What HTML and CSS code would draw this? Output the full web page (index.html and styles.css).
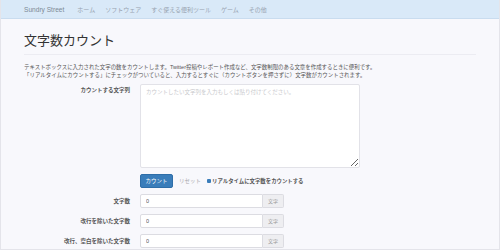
FILE: index.html
```html
<!DOCTYPE html>
<html lang="ja">
<head>
	<meta charset="utf-8">
	<title>文字数カウント - Sundry Street</title>
	<link rel="stylesheet" href="styles.css">
</head>
<body>
	<div class="frame">
		<!-- TOP -->
		<nav class="navbar">
			<a class="brand" href="#">Sundry Street</a>
			<ul class="nav-list">
				<li><a href="#">ホーム</a></li>
				<li><a href="#">ソフトウェア</a></li>
				<li><a href="#">すぐ使える便利ツール</a></li>
				<li><a href="#">ゲーム</a></li>
				<li><a href="#">その他</a></li>
			</ul>
		</nav>

		<!-- Counter -->
		<div class="container">
			<h1 class="page-title">文字数カウント</h1>
			<p class="intro">テキストボックスに入力された文字の数をカウントします。Twitter投稿やレポート作成など、文字数制限のある文章を作成するときに便利です。<br>「リアルタイムにカウントする」にチェックがついていると、入力するとすぐに（カウントボタンを押さずに）文字数がカウントされます。</p>

			<form class="form-grid">
				<label class="field-label label-top" for="source">カウントする文字列</label>
				<textarea id="source" class="text-box" placeholder="カウントしたい文字列を入力もしくは貼り付けてください。"></textarea>

				<div></div>
				<div class="actions">
					<button type="button" class="btn btn-primary">カウント</button>
					<button type="button" class="btn btn-plain">リセット</button>
					<label class="realtime"><input type="checkbox" class="check" checked>リアルタイムに文字数をカウントする</label>
				</div>

				<label class="field-label">文字数</label>
				<div class="input-group"><input type="text" class="count" value="0" readonly><span class="addon">文字</span></div>

				<label class="field-label">改行を除いた文字数</label>
				<div class="input-group"><input type="text" class="count" value="0" readonly><span class="addon">文字</span></div>

				<label class="field-label">改行、空白を除いた文字数</label>
				<div class="input-group"><input type="text" class="count" value="0" readonly><span class="addon">文字</span></div>
			</form>
		</div>
	</div>
</body>
</html>
```

FILE: styles.css
```css
/*---------------- page ----------------*/
body{
	margin: 0;
	background: #ffffff;
	font-family: "Liberation Sans", "Noto Sans CJK JP", sans-serif;
	color: #444;
}

.frame{
	height: 249px;
	background-color: #f8f8fc;
	border: 1px solid #e4e4ea;
	border-top: 0;
	overflow: hidden;
}

/*---------------- navbar ----------------*/
.navbar{
	display: flex;
	align-items: center;
	height: 18px;
	padding-left: 23px;
	background-color: #d9e9f8;
	border-bottom: 1px solid #c9dcef;
}

.brand{
	font-size: 6.6px;
	color: #7d8996;
	text-decoration: none;
	margin-right: 8px;
}

.nav-list{
	display: flex;
	margin: 0;
	padding: 0;
	list-style: none;
}

.nav-list a{
	display: block;
	padding: 0 5px;
	font-size: 6px;
	color: #98a3b0;
	text-decoration: none;
}

/*---------------- content ----------------*/
.container{
	padding: 0 23px;
}

.page-title{
	margin: 14px 0 0;
	padding-bottom: 5px;
	font-size: 13px;
	line-height: 16px;
	font-weight: normal;
	color: #333;
	border-bottom: 1px solid #ececf2;
}

.intro{
	margin: 8px 0 5px;
	font-size: 5.45px;
	line-height: 8px;
	color: #555;
	white-space: nowrap;
}

/* form layout: label column + control column */
.form-grid{
	display: grid;
	grid-template-columns: 106px 220px;
	column-gap: 10px;
	row-gap: 6px;
	align-items: center;
}

.field-label{
	text-align: right;
	font-size: 5.5px;
	font-weight: bold;
	line-height: 14px;
	color: #555;
}

.label-top{
	align-self: start;
	line-height: 12px;
}

.text-box{
	box-sizing: border-box;
	width: 220px;
	height: 84px;
	margin: 0;
	padding: 3px 5px;
	font-family: inherit;
	font-size: 5.5px;
	background: #fff;
	border: 1px solid #e2e2e8;
	border-radius: 2px;
}

.text-box::placeholder{
	color: #c8c8cc;
}

.actions{
	display: flex;
	align-items: center;
	height: 14px;
}

.btn{
	height: 14px;
	padding: 0 5px;
	font-family: inherit;
	font-size: 5.5px;
	white-space: nowrap;
	border: 0;
	border-radius: 2px;
	cursor: pointer;
}

.btn-primary{
	width: 33px;
	padding: 0;
	background-color: #3a7dba;
	color: #fff;
	border: 1px solid #2f6ea8;
}

.btn-plain{
	background: none;
	color: #a8a8ad;
	padding: 0 6px;
}

.realtime{
	display: flex;
	align-items: center;
	font-size: 5.4px;
	font-weight: bold;
	color: #555;
}

.check{
	appearance: none;
	width: 4px;
	height: 4px;
	margin: 0 1px 0 0;
	background-color: #3a7dba;
	border-radius: 1px;
}

.input-group{
	display: flex;
	height: 14px;
}

.count{
	box-sizing: border-box;
	width: 123px;
	height: 14px;
	margin: 0;
	padding: 0 5px;
	font-family: inherit;
	font-size: 5.5px;
	color: #555;
	background: #fff;
	border: 1px solid #dcdce2;
	border-radius: 2px 0 0 2px;
}

.addon{
	box-sizing: border-box;
	width: 21px;
	height: 14px;
	line-height: 12px;
	text-align: center;
	font-size: 5px;
	color: #999;
	background-color: #eeeef1;
	border: 1px solid #dcdce2;
	border-left: 0;
	border-radius: 0 2px 2px 0;
}
```
